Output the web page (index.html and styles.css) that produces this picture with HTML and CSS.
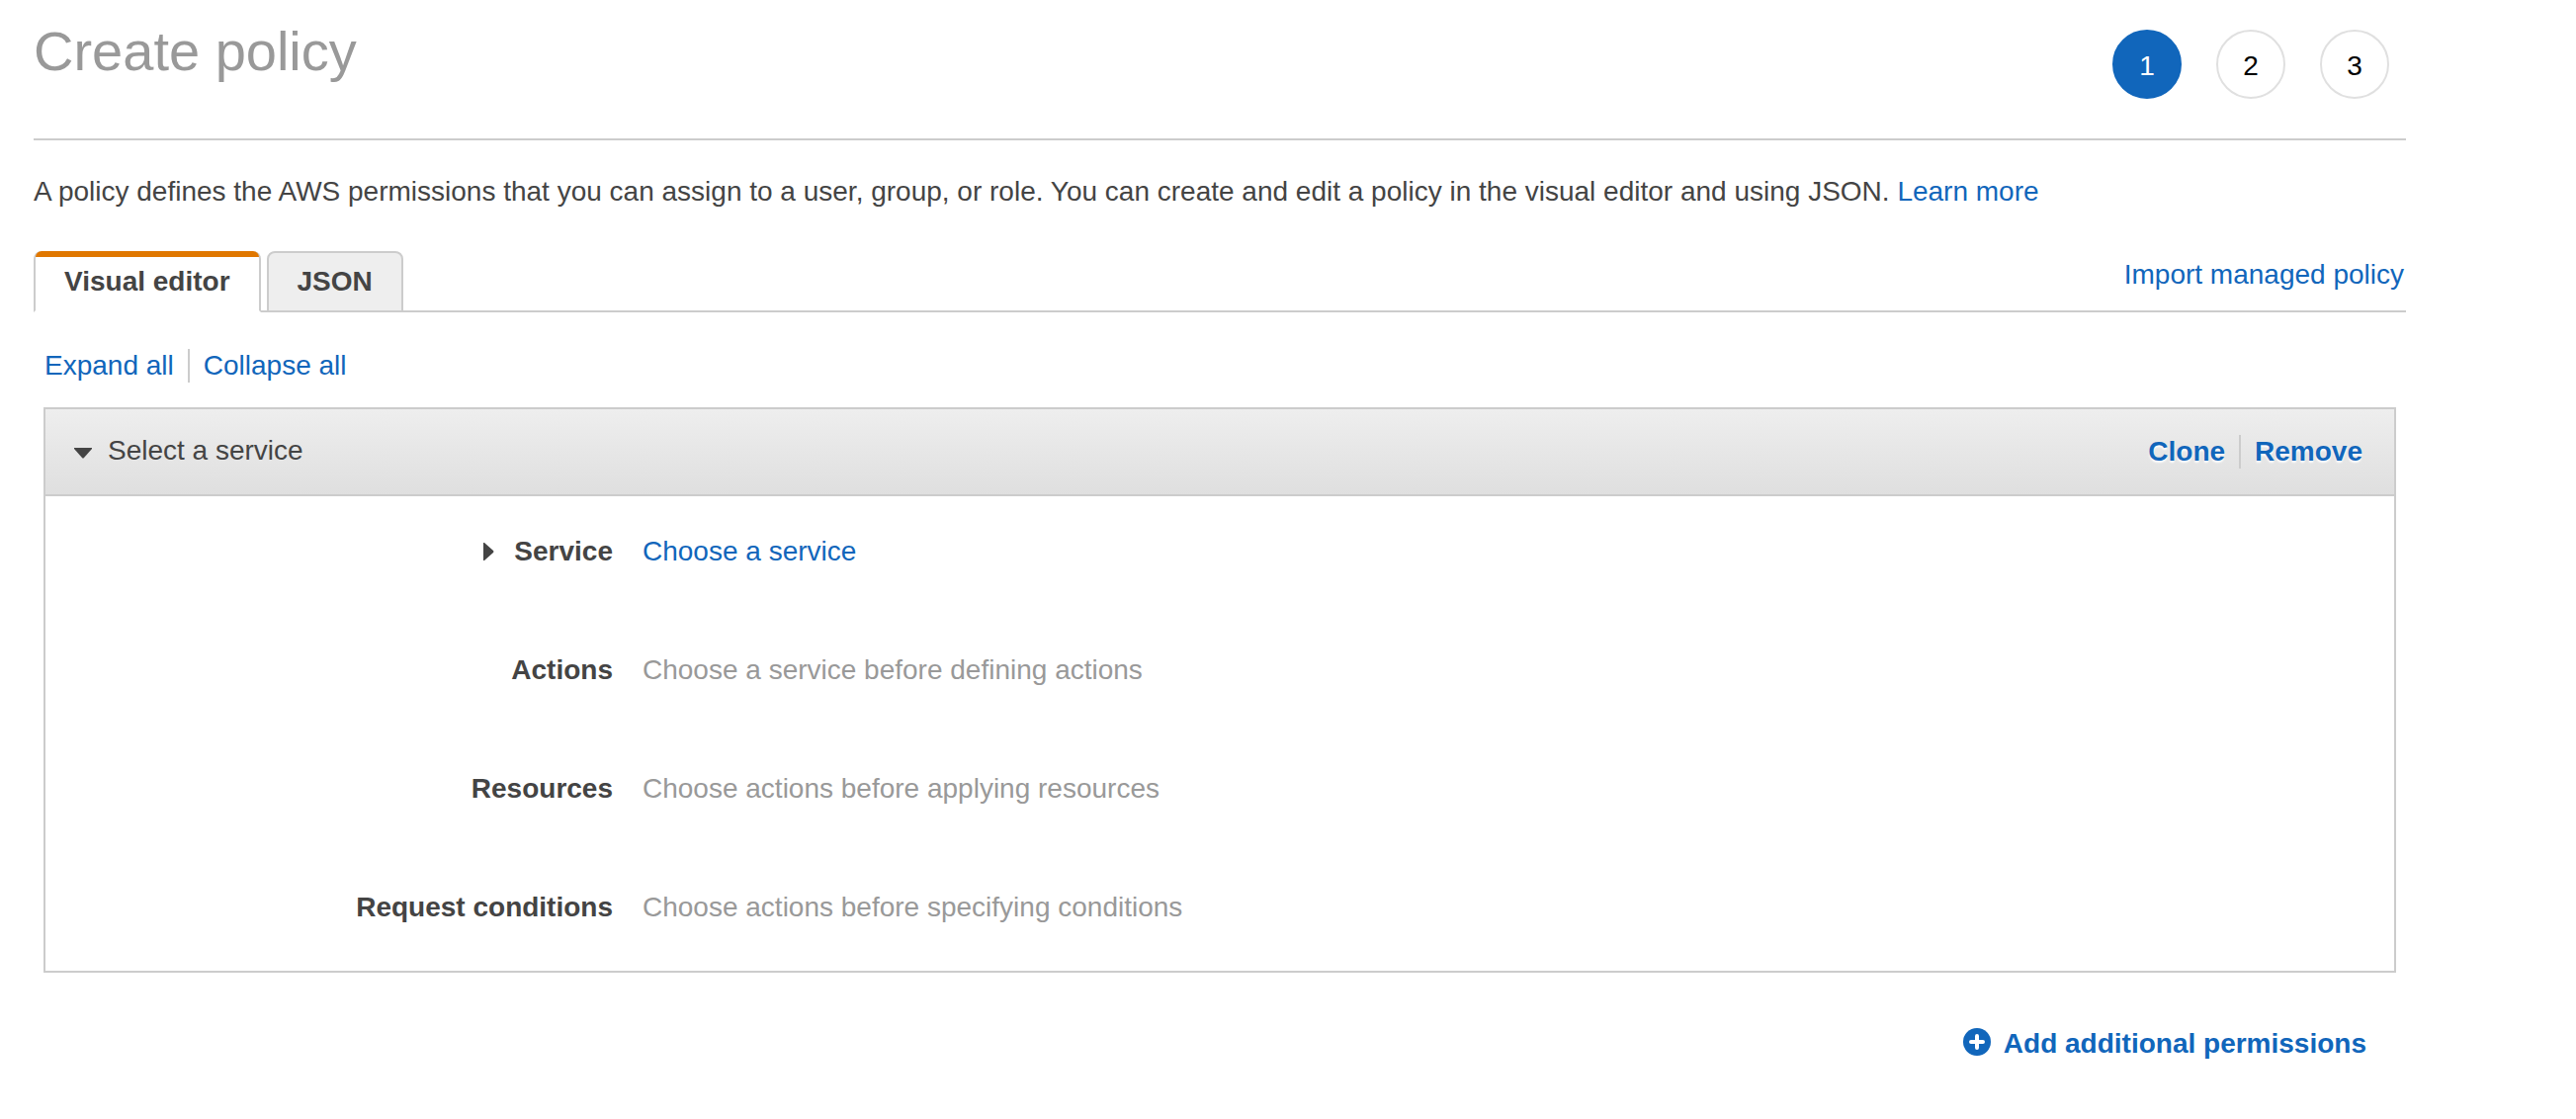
FILE: index.html
```html
<!DOCTYPE html>
<html lang="en">
<head>
<meta charset="utf-8">
<meta name="viewport" content="width=device-width, initial-scale=1">
<title>Create policy</title>
<link rel="stylesheet" href="styles.css">
</head>
<body>
<main class="page">
  <header class="page-header">
    <h1 class="page-title">Create policy</h1>
    <ol class="steps">
      <li class="step step-current" aria-current="step">1</li>
      <li class="step">2</li>
      <li class="step">3</li>
    </ol>
  </header>

  <p class="intro">A policy defines the AWS permissions that you can assign to a user, group, or role. You can create and edit a policy in the visual editor and using JSON. <a href="#learn">Learn more</a></p>

  <div class="tab-bar">
    <div class="tabs" role="tablist">
      <button class="tab tab-active" type="button" role="tab" aria-selected="true">Visual editor</button>
      <button class="tab" type="button" role="tab" aria-selected="false">JSON</button>
    </div>
    <a class="import-link" href="#import">Import managed policy</a>
  </div>

  <section class="editor">
    <div class="link-group">
      <a href="#expand">Expand all</a>
      <span class="divider"></span>
      <a href="#collapse">Collapse all</a>
    </div>

    <section class="panel">
      <div class="panel-header">
        <button class="panel-toggle" type="button" aria-expanded="true">
          <svg class="caret-down" viewBox="0 0 18 11" aria-hidden="true"><path d="M0 0h18v1L10 10q-1 1-2 0L0 1z"/></svg>
          Select a service
        </button>
        <div class="link-group panel-actions">
          <a href="#clone">Clone</a>
          <span class="divider"></span>
          <a href="#remove">Remove</a>
        </div>
      </div>
      <dl class="fields">
        <div class="field">
          <dt><svg class="caret-right" viewBox="0 0 11 18" aria-hidden="true"><path d="M0 0h1l9 8q1 1 0 2l-9 8H0z"/></svg>Service</dt>
          <dd><a href="#service">Choose a service</a></dd>
        </div>
        <div class="field">
          <dt>Actions</dt>
          <dd>Choose a service before defining actions</dd>
        </div>
        <div class="field">
          <dt>Resources</dt>
          <dd>Choose actions before applying resources</dd>
        </div>
        <div class="field">
          <dt>Request conditions</dt>
          <dd>Choose actions before specifying conditions</dd>
        </div>
      </dl>
    </section>

    <div class="editor-footer">
      <a class="add-link" href="#add">
        <svg class="plus-icon" viewBox="0 0 28 28" aria-hidden="true"><circle cx="14" cy="14" r="14"/><path d="M14 8v12M8 14h12"/></svg>
        Add additional permissions
      </a>
    </div>
  </section>
</main>
</body>
</html>
```
FILE: styles.css
```css
* {
  box-sizing: border-box;
}

body {
  margin: 0;
  background: #fff;
  color: #444;
  font: 28px/40px "Liberation Sans", Arial, sans-serif;
}

a {
  color: #16b;
  text-decoration: none;
}

a:hover {
  text-decoration: underline;
}

button {
  font: inherit;
  color: inherit;
  cursor: pointer;
}

.page {
  padding: 0 172px 40px 34px;
}

/* Title and wizard steps */
.page-header {
  display: flex;
  justify-content: space-between;
  align-items: flex-start;
  padding-bottom: 40px;
  border-bottom: 2px solid #ccc;
}

.page-title {
  margin: 20px 0 0;
  color: #999;
  font-size: 56px;
  font-weight: 400;
  line-height: 64px;
}

.steps {
  display: flex;
  gap: 35px;
  margin: 30px 17px 0 0;
  padding: 0;
  list-style: none;
}

.step {
  display: flex;
  align-items: center;
  justify-content: center;
  width: 70px;
  height: 70px;
  padding-top: 4px;
  border: 2px solid #e0e0e0;
  border-radius: 50%;
  color: #000;
}

.step-current {
  background: #16b;
  border-color: #16b;
  color: #fff;
}

.intro {
  margin: 32px 0 40px;
}

/* Tabs */
.tab-bar {
  display: flex;
  justify-content: space-between;
  align-items: flex-start;
  border-bottom: 2px solid #ccc;
}

.tabs {
  display: flex;
  gap: 6px;
  margin-bottom: -2px;
}

.tab {
  position: relative;
  height: 62px;
  padding: 0 29px;
  border: 2px solid #ccc;
  border-radius: 8px 8px 0 0;
  background: #eee;
  font-weight: 700;
}

.tab-active {
  padding-top: 2px;
  border-top: 0;
  border-bottom-color: #fff;
  background: #fff;
}

.tab-active::before {
  content: "";
  position: absolute;
  top: 0;
  right: 0;
  left: 0;
  height: 6px;
  border-radius: 6px 6px 0 0;
  background: #e07700;
}

.import-link {
  margin: 4px 2px 0 0;
}

/* Visual editor */
.editor {
  padding: 34px 10px 0;
}

.link-group {
  display: flex;
  align-items: center;
  gap: 14px;
}

.editor > .link-group {
  margin: 0 0 22px 1px;
}

.divider {
  width: 2px;
  height: 34px;
  background: #ccc;
}

.panel {
  border: 2px solid #ccc;
}

.panel-header {
  display: flex;
  justify-content: space-between;
  align-items: center;
  height: 88px;
  padding: 0 32px 0 29px;
  border-bottom: 2px solid #ccc;
  background: linear-gradient(#eee, #dfdfdf);
}

.panel-toggle {
  display: flex;
  align-items: center;
  gap: 16px;
  padding: 0 0 2px;
  border: 0;
  background: none;
}

.caret-down {
  width: 18px;
  height: 11px;
  margin-top: 4px;
  fill: #444;
}

.panel-actions {
  font-weight: 700;
  text-shadow: 0 2px 2px #fff;
}

.fields {
  display: grid;
  gap: 80px;
  margin: 0;
  padding: 36px 0 44px;
}

.field {
  display: grid;
  grid-template-columns: 1fr 3fr;
}

.field dt {
  display: flex;
  justify-content: flex-end;
  align-items: center;
  gap: 20px;
  padding-right: 20px;
  font-weight: 700;
}

.caret-right {
  width: 11px;
  height: 18px;
  fill: #444;
}

.field dd {
  margin: 0;
  padding-left: 10px;
  color: #999;
}

.editor-footer {
  display: flex;
  justify-content: flex-end;
  padding: 52px 30px 0;
}

.add-link {
  display: flex;
  align-items: center;
  gap: 13px;
  font-weight: 700;
}

.plus-icon {
  width: 28px;
  height: 28px;
  margin-bottom: 4px;
  fill: #16b;
  stroke: none;
}

.plus-icon path {
  stroke: #fff;
  stroke-width: 4;
  stroke-linecap: round;
}
```
